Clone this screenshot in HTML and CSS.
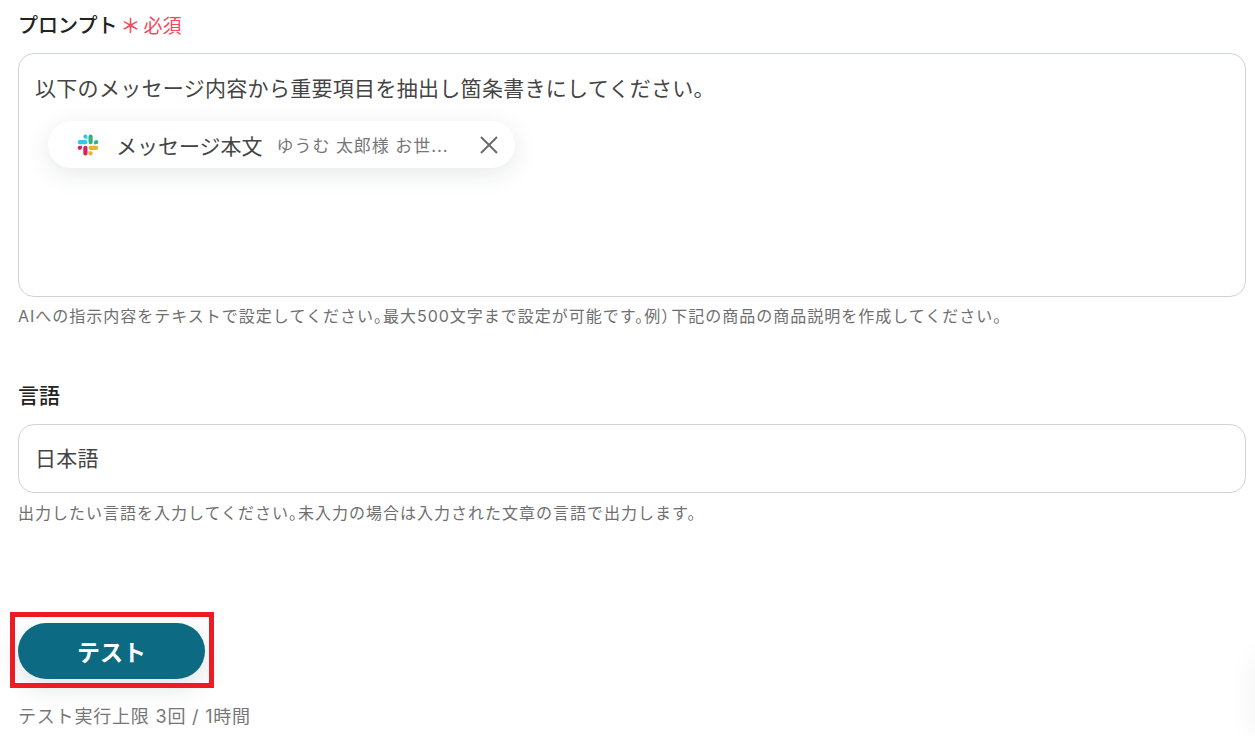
FILE: index.html
```html
<!DOCTYPE html>
<html lang="ja">
<head>
  <meta charset="UTF-8">
  <meta name="viewport" content="width=device-width, initial-scale=1.0">
  <title>プロンプト設定</title>
  <link rel="stylesheet" href="styles.css">
</head>
<body>
  <div class="form">
    <div class="field field-prompt">
      <div class="label">
        <span>プロンプト</span>
        <span class="req-mark">＊</span>
        <span class="req-text">必須</span>
      </div>
      <div class="box box-prompt">
        <p class="box-text">以下のメッセージ内容から重要項目を抽出し箇条書きにしてください。</p>
        <div class="chip">
          <svg class="slack" width="24" height="24" viewBox="0 0 24 24">
            <path fill="#36c5f0" d="M9.4 1.5a2.1 2.1 0 1 0 0 4.2h2.1V3.6a2.1 2.1 0 0 0-2.1-2.1zM9.4 7.1H3.8a2.1 2.1 0 1 0 0 4.2h5.6a2.1 2.1 0 1 0 0-4.2z"/>
            <path fill="#2eb67d" d="M22.3 9.2a2.1 2.1 0 1 0-4.2 0v2.1h2.1a2.1 2.1 0 0 0 2.1-2.1zM16.7 9.2V3.6a2.1 2.1 0 1 0-4.2 0v5.6a2.1 2.1 0 1 0 4.2 0z"/>
            <path fill="#ecb22e" d="M14.6 22.5a2.1 2.1 0 1 0 0-4.2h-2.1v2.1a2.1 2.1 0 0 0 2.1 2.1zM14.6 16.9h5.6a2.1 2.1 0 1 0 0-4.2h-5.6a2.1 2.1 0 1 0 0 4.2z"/>
            <path fill="#e01e5a" d="M1.7 14.8a2.1 2.1 0 1 0 4.2 0v-2.1H3.8a2.1 2.1 0 0 0-2.1 2.1zM7.3 14.8v5.6a2.1 2.1 0 1 0 4.2 0v-5.6a2.1 2.1 0 1 0-4.2 0z"/>
          </svg>
          <span class="chip-name">メッセージ本文</span>
          <span class="chip-value">ゆうむ 太郎様 お世...</span>
          <svg class="chip-close" width="20" height="20" viewBox="0 0 20 20">
            <path d="M2 2l16 16M18 2L2 18" stroke="#6b6b6b" stroke-width="2" fill="none"/>
          </svg>
        </div>
      </div>
      <p class="help">AIへの指示内容をテキストで設定してください<span class="tight">。</span>最大500文字まで設定が可能です<span class="tight">。</span>例<span class="tight-paren">）</span>下記の商品の商品説明を作成してください。</p>
    </div>

    <div class="field field-lang">
      <div class="label"><span class="label-lang">言語</span></div>
      <div class="box box-input">
        <p class="box-text">日本語</p>
      </div>
      <p class="help">出力したい言語を入力してください<span class="tight">。</span>未入力の場合は入力された文章の言語で出力します。</p>
    </div>

    <div class="actions">
      <button class="test-btn" type="button">テスト</button>
      <div class="highlight"></div>
    </div>
    <p class="limit">テスト実行上限 3回 / 1時間</p>
  </div>
  <div class="corner-shade"></div>
</body>
</html>
```

FILE: styles.css
```css
html, body {
  height: 100%;
}
body {
  margin: 0;
  background: #fff;
  color: #2e2e2e;
  font-family: Inter, "Noto Sans CJK JP", sans-serif;
  overflow: hidden;
  position: relative;
}
.form {
  padding: 10px 9px 0 18px;
  display: flex;
  flex-direction: column;
}
.label {
  display: flex;
  align-items: center;
  height: 28px;
  font-size: 20px;
  font-weight: 500;
  color: #222;
}
.label-lang {
  font-size: 21px;
}
.req-mark {
  color: #f5475c;
  font-size: 20px;
  margin-left: 2px;
  width: 22px;
  text-align: center;
}
.req-text {
  color: #f5475c;
  font-size: 19px;
  font-weight: 400;
  margin-left: 2px;
}
.box {
  border: 1px solid #cfd3da;
  border-radius: 16px;
  box-sizing: border-box;
  margin-top: 15px;
  padding: 0 16px;
}
.box-prompt {
  height: 244px;
}
.box-input {
  height: 69px;
  margin-top: 15px;
  display: flex;
  align-items: center;
}
.box-prompt .box-text {
  margin-top: 18px;
}
.box-text {
  margin: 0;
  font-size: 21px;
  letter-spacing: 0.3px;
  line-height: 34px;
  color: #444;
}
.chip {
  display: flex;
  align-items: center;
  width: 467px;
  height: 47px;
  margin: 15px 0 0 13px;
  padding: 0 16px 0 28px;
  box-sizing: border-box;
  border-radius: 24px;
  background: #fff;
  box-shadow: 0 6px 24px rgba(30, 40, 60, 0.1);
}
.slack {
  flex: none;
}
.chip-name {
  margin-left: 16px;
  font-size: 21px;
  color: #444;
  white-space: nowrap;
}
.chip-value {
  margin-left: 14px;
  font-size: 17px;
  letter-spacing: 0.9px;
  color: #777;
  white-space: nowrap;
  flex: 1;
}
.chip-close {
  flex: none;
}
.help {
  margin: 8px 0 0;
  font-size: 16px;
  letter-spacing: 1px;
  line-height: 22px;
  color: #6f6f6f;
  white-space: nowrap;
}
.tight {
  margin-right: -8px;
}
.tight-paren {
  margin-right: -7px;
}
.field-lang {
  margin-top: 53px;
}
.field-lang .box {
  margin-top: 16px;
}
.field-lang .help {
  margin-top: 9px;
}
.actions {
  position: relative;
  margin-top: 99px;
  height: 56px;
}
.test-btn {
  display: block;
  width: 187px;
  height: 56px;
  border: 0;
  border-radius: 28px;
  background: #0c6a82;
  color: #fff;
  font-family: inherit;
  font-size: 23px;
  font-weight: 700;
  box-shadow: 0 8px 24px rgba(30, 40, 60, 0.14);
}
/* red annotation frame over the button */
.highlight {
  position: absolute;
  left: -8px;
  top: -11px;
  width: 204px;
  height: 76px;
  box-sizing: border-box;
  border: 5px solid #ed1c24;
}
.limit {
  margin: 26px 0 0;
  font-size: 18px;
  letter-spacing: 0.8px;
  line-height: 24px;
  color: #777;
}
.corner-shade {
  position: absolute;
  right: -30px;
  bottom: 0;
  width: 30px;
  height: 80px;
  border-radius: 15px;
  box-shadow: 0 0 30px rgba(30, 40, 60, 0.06);
}
```
